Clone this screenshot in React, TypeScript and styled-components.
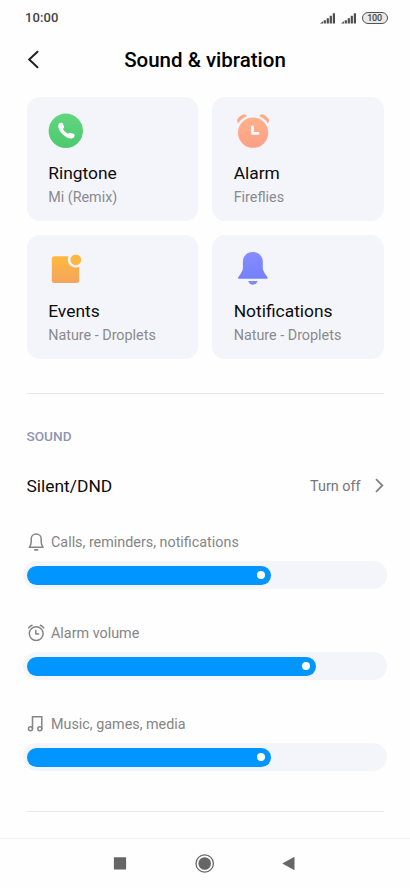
import React from 'react';
import styled, { createGlobalStyle } from 'styled-components';

const GlobalStyle = createGlobalStyle`
  * { box-sizing: border-box; }
  body { margin: 0; background: #fefefe; font-family: Roboto, "Noto Sans", sans-serif; }
  svg { display: block; flex: none; }
`;

const Screen = styled.div`
  width: 410px;
  height: 888px;
  display: flex;
  flex-direction: column;
  background: #fefefe;
  overflow: hidden;
`;

const StatusBar = styled.div`
  height: 36px;
  display: flex;
  align-items: center;
  justify-content: space-between;
  padding: 0 22.5px 0 25px;
`;

const Clock = styled.span`
  font-size: 13px;
  line-height: 16px;
  font-weight: 500;
  letter-spacing: 0.1px;
  color: #444;
`;

const StatusIcons = styled.div`
  display: flex;
  align-items: center;
  gap: 5px;
`;

const Battery = styled.div`
  width: 26px;
  height: 12px;
  border: 1.3px solid #555;
  border-radius: 6px;
  background: #e9e9e9;
  color: #444;
  font-size: 9px;
  line-height: 10px;
  font-weight: 500;
  letter-spacing: -0.2px;
  text-align: center;
`;

const Header = styled.header`
  height: 48px;
  display: grid;
  grid-template-columns: 40px 1fr 40px;
  align-items: center;
  padding: 0 13px;
`;

const Title = styled.h1`
  margin: 0;
  font-size: 20.5px;
  line-height: 24px;
  font-weight: 500;
  text-align: center;
  color: #000;
`;

const BackButton = styled.button`
  border: 0;
  padding: 0 0 0 14px;
  background: none;
`;

const Content = styled.main`
  flex: 1;
  padding: 13px 26.5px 0;
`;

const CardGrid = styled.div`
  display: grid;
  grid-template-columns: 171.5px 171.5px;
  grid-auto-rows: 124px;
  gap: 14px;
`;

const Card = styled.div`
  border-radius: 13px;
  background: #f4f5fa;
  padding: 13px 21.7px 0;
`;

const CardTitle = styled.div`
  margin-top: 11px;
  font-size: 17.4px;
  line-height: 24px;
  color: #0c0c0c;
`;

const CardSub = styled.div`
  margin-top: 1px;
  font-size: 14.35px;
  line-height: 23px;
  color: #8a8a8d;
`;

const Divider = styled.hr<{ $top: number }>`
  border: 0;
  height: 1px;
  margin: ${(p) => p.$top}px 0 0;
  background: #e8e8e9;
`;

const SectionTitle = styled.h2`
  margin: 33px 0 0;
  font-size: 13.6px;
  line-height: 18px;
  font-weight: 500;
  color: #9095b1;
`;

const Row = styled.div`
  height: 60px;
  margin-top: 11px;
  display: flex;
  align-items: center;
  justify-content: space-between;
`;

const RowTitle = styled.span`
  font-size: 17.4px;
  color: #0c0c0c;
`;

const RowValue = styled.span`
  display: flex;
  align-items: center;
  gap: 13px;
  margin-right: -1px;
  font-size: 14.4px;
  color: #777;
`;

const VolumeBlock = styled.section`
  height: 91px;
  padding-top: 16px;
`;

const VolumeLabel = styled.div`
  height: 20px;
  display: flex;
  align-items: center;
  gap: 4.5px;
  font-size: 14.35px;
  color: #858585;
`;

const Track = styled.div`
  height: 28px;
  margin: 9.3px -3.5px 0;
  padding: 4.5px 4px;
  border-radius: 14px;
  background: #f4f5fa;
`;

const Fill = styled.div`
  height: 19px;
  border-radius: 10px;
  background: #0095ff;
  display: flex;
  align-items: center;
  justify-content: flex-end;
  padding-right: 6px;
`;

const Thumb = styled.span`
  width: 8px;
  height: 8px;
  border-radius: 50%;
  background: #fff;
`;

const NavBar = styled.nav`
  height: 50px;
  border-top: 1px solid #f0f0f0;
  display: flex;
  align-items: center;
  justify-content: center;
  gap: 64px;
`;

const Signal = () => (
  <svg width="16" height="12" viewBox="0 0 16 12" fill="#4c4c4c">
    <path d="M0 11.5 3 9.2v2.3zM3.7 8.2h2.2v3.3H3.700zM6.700 6.200h2.200v5.300H6.700zM9.700 3.800h2.200v7.700H9.700zM12.800 1.200H15v10.300h-2.200z" />
  </svg>
);

const Gradient = ({ id, from, to }: { id: string; from: string; to: string }) => (
  <defs>
    <linearGradient id={id} x1="0" y1="0" x2="0" y2="1">
      <stop offset="0" stopColor={from} />
      <stop offset="1" stopColor={to} />
    </linearGradient>
  </defs>
);

const PhoneIcon = () => (
  <svg width="40" height="40" viewBox="0 0 40 40">
    <Gradient id="phone" from="#62d67f" to="#4cc96d" />
    <circle cx="17.8" cy="20.8" r="17.2" fill="url(#phone)" />
    <path
      fill="#fff"
      d="M11.3 13.3c1.600-1.100 3.200-.7 3.700.5l.9 2.500c.4 1.200-.1 1.900-.9 2.700 1 2 2.800 3.700 4.900 4.700.9-.8 1.700-1.200 2.800-.8l2.700.9c1.300.5 1.700 1.900.7 3.300-1.300 1.900-4.400 1.900-7.200.4-3-1.600-5.900-4.500-7.500-7.500-1.400-2.600-1.800-5.400-.1-6.700z"
    />
  </svg>
);

const AlarmIcon = () => (
  <svg width="40" height="40" viewBox="0 0 40 40">
    <Gradient id="alarm" from="#ffb18a" to="#ff9f85" />
    <circle cx="19.1" cy="22.7" r="15.1" fill="url(#alarm)" />
    <path
      fill="#ffab84"
      d="M3.500 9.200C5 6.800 7 5.300 9.200 4.500c1.400-.5 2.900.2 3.700 1.800C9.500 7.500 6.500 9.900 4.300 13.200 3.200 12.300 2.800 10.400 3.500 9.200zM34.700 9.200C33.200 6.800 31.200 5.300 29 4.500c-1.400-.5-2.900.2-3.700 1.800 3.400 1.200 6.400 3.600 8.600 6.900 1.100-.9 1.500-2.800.8-4z"
    />
    <path d="M18.500 17v6.400H24" fill="none" stroke="#fff" strokeWidth="2.8" strokeLinecap="round" strokeLinejoin="round" />
  </svg>
);

const EventsIcon = () => (
  <svg width="40" height="40" viewBox="0 0 40 40">
    <Gradient id="events" from="#ffb93e" to="#f3a55f" />
    <rect x="3.8" y="8.3" width="27.4" height="26.7" rx="2.5" fill="url(#events)" />
    <circle cx="27.7" cy="11.7" r="7.9" fill="#f4f5fa" />
    <circle cx="27.8" cy="11.8" r="5.4" fill="#fdb641" />
  </svg>
);

const BellIcon = () => (
  <svg width="40" height="40" viewBox="0 0 40 40">
    <Gradient id="bell" from="#868dff" to="#7480fb" />
    <path
      fill="url(#bell)"
      d="M18.800 4c-5.800 0-9.900 4.200-9.900 9.600v6.200c0 2-.8 3.700-1.900 5.400l-2.600 3.900c-.6.900-.2 1.700.8 1.700h27.300c1 0 1.400-.8.800-1.700l-2.600-3.900c-1.100-1.700-1.900-3.400-1.900-5.400v-6.200C28.800 8.200 24.600 4 18.800 4z"
    />
    <path fill="#7f88fd" d="M14.200 33h9.400c-.8 2.400-2.500 3.700-4.700 3.700s-3.900-1.300-4.700-3.700z" />
  </svg>
);

const line = { fill: 'none', stroke: '#858585', strokeWidth: 1.5, strokeLinecap: 'round', strokeLinejoin: 'round' } as const;

const BellOutline = () => (
  <svg width="20" height="20" viewBox="0 0 20 20" {...line}>
    <path d="M9.200 2C6.200 2 4.200 4.200 4.200 7v3.300c0 2-.8 3.200-1.900 5h13.800c-1.100-1.800-1.900-3-1.900-5V7c0-2.800-2-5-5-5z" />
    <path d="M7.800 17.800h2.800" strokeWidth="1.7" />
  </svg>
);

const AlarmOutline = () => (
  <svg width="20" height="20" viewBox="0 0 20 20" {...line}>
    <circle cx="9.2" cy="10.6" r="6.9" />
    <path d="M8.800 7.400v3.500h2.900M1.700 4.900C2.500 3.600 3.600 2.700 5 2.200M16.700 4.900c-.8-1.300-1.900-2.200-3.300-2.700" />
  </svg>
);

const MusicOutline = () => (
  <svg width="20" height="20" viewBox="0 0 20 20" {...line}>
    <path d="M5.500 14.700V2.800h9.300v11.900" strokeLinejoin="miter" />
    <circle cx="3.5" cy="14.8" r="2" />
    <circle cx="12.8" cy="14.8" r="2" />
  </svg>
);

const cards = [
  { title: 'Ringtone', sub: 'Mi (Remix)', Icon: PhoneIcon },
  { title: 'Alarm', sub: 'Fireflies', Icon: AlarmIcon },
  { title: 'Events', sub: 'Nature - Droplets', Icon: EventsIcon },
  { title: 'Notifications', sub: 'Nature - Droplets', Icon: BellIcon },
];

const volumes = [
  { label: 'Calls, reminders, notifications', width: 244, Icon: BellOutline },
  { label: 'Alarm volume', width: 288.5, Icon: AlarmOutline },
  { label: 'Music, games, media', width: 244, Icon: MusicOutline },
];

export default function App() {
  return (
    <Screen>
      <GlobalStyle />
      <StatusBar>
        <Clock>10:00</Clock>
        <StatusIcons>
          <Signal />
          <Signal />
          <Battery>100</Battery>
        </StatusIcons>
      </StatusBar>
      <Header>
        <BackButton aria-label="Back">
          <svg width="14" height="20" viewBox="0 0 14 20" fill="none" stroke="#222" strokeWidth="2" strokeLinecap="round">
            <path d="M10.5 1.700 2.200 9.500l8.300 7.800" />
          </svg>
        </BackButton>
        <Title>Sound &amp; vibration</Title>
      </Header>
      <Content>
        <CardGrid>
          {cards.map(({ title, sub, Icon }) => (
            <Card key={title}>
              <Icon />
              <CardTitle>{title}</CardTitle>
              <CardSub>{sub}</CardSub>
            </Card>
          ))}
        </CardGrid>
        <Divider $top={34} />
        <SectionTitle>SOUND</SectionTitle>
        <Row>
          <RowTitle>Silent/DND</RowTitle>
          <RowValue>
            Turn off
            <svg width="11" height="16" viewBox="0 0 11 16" fill="none" stroke="#858585" strokeWidth="1.9">
              <path d="m2 1.200 6.300 6.300L2 13.800" />
            </svg>
          </RowValue>
        </Row>
        {volumes.map(({ label, width, Icon }) => (
          <VolumeBlock key={label}>
            <VolumeLabel>
              <Icon />
              {label}
            </VolumeLabel>
            <Track>
              <Fill style={{ width }}>
                <Thumb />
              </Fill>
            </Track>
          </VolumeBlock>
        ))}
        <Divider $top={22} />
      </Content>
      <NavBar>
        <svg width="20" height="20" viewBox="0 0 20 20" fill="#666">
          <rect x="2.9" y="3.2" width="12.2" height="12.3" rx=".5" />
        </svg>
        <svg width="20" height="20" viewBox="0 0 20 20">
          <circle cx="9.7" cy="9.5" r="8.7" fill="none" stroke="#666" strokeWidth="1.3" />
          <circle cx="9.7" cy="9.5" r="6.3" fill="#666" />
        </svg>
        <svg width="20" height="20" viewBox="0 0 20 20" fill="#666">
          <path d="M3.300 9.500 15.500 2.700v13.600z" />
        </svg>
      </NavBar>
    </Screen>
  );
}
